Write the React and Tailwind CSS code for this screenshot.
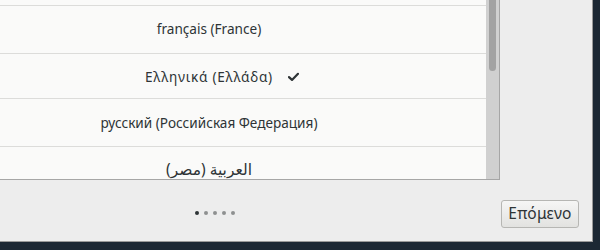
import React from "react";

const font = { fontFamily: '"Noto Sans", "DejaVu Sans", sans-serif' };

function Check() {
  return (
    <svg width="11" height="9" viewBox="0 0 11 9" className="absolute left-full top-1/2 ml-[15px] -translate-y-1/2">
      <path d="M1 4.6 L4 7.4 L10 1.2" fill="none" stroke="#2e3436" strokeWidth="2.2" strokeLinecap="round" strokeLinejoin="round" />
    </svg>
  );
}

export default function App() {
  return (
    <div className="w-[600px] h-[250px] bg-[#1c2834] overflow-hidden" style={font}>
      <div className="w-[593px] h-[242px] bg-[#ededed] border-r border-b border-[#9a9a9a] flex flex-col">
        <div className="w-[500px] h-[180px] flex border-r border-b border-[#a6a6a6]">
          <div className="w-[486px] h-full overflow-hidden bg-[#fafaf9]">
            <div className="w-[554px] ml-[-68px] flex flex-col text-[13.6px] text-[#2e3436]">
              <div className="h-[6px] border-b border-[#dcdcda]" />
              <div className="h-[48px] border-b border-[#dcdcda] flex items-center justify-center">
                <span>français (France)</span>
              </div>
              <div className="h-[45px] border-b border-[#dcdcda] flex items-center justify-center pt-[2px]">
                <span className="relative tracking-[0.75px]">
                  Ελληνικά (Ελλάδα)
                  <Check />
                </span>
              </div>
              <div className="h-[48px] border-b border-[#dcdcda] flex items-center justify-center pt-[2px]">
                <span>русский (Российская Федерация)</span>
              </div>
              <div className="h-[48px] flex items-center justify-center pb-[2px]">
                <span dir="rtl" className="text-[15.5px]">العربية (مصر)</span>
              </div>
            </div>
          </div>
          <div className="w-[13px] h-full bg-[#d0d0d0] pl-[3px]">
            <div className="w-[7px] h-[81px] mt-[-10px] rounded-full bg-[#a2a2a2]" />
          </div>
        </div>
        <div className="flex pt-[20px]">
          <div className="w-[430px] h-[28px] flex items-center justify-center gap-[5px]">
            <span className="w-[4px] h-[4px] rounded-full bg-[#2e3436] mb-[2px]" />
            <span className="w-[4px] h-[4px] rounded-full bg-[#8e9090] mb-[2px]" />
            <span className="w-[4px] h-[4px] rounded-full bg-[#8e9090] mb-[2px]" />
            <span className="w-[4px] h-[4px] rounded-full bg-[#8e9090] mb-[2px]" />
            <span className="w-[4px] h-[4px] rounded-full bg-[#8e9090] mb-[2px]" />
          </div>
          <div className="ml-[71px] w-[78px] h-[28px] rounded-[3px] border border-[#b6b6b3] bg-gradient-to-b from-[#f6f6f5] to-[#e2e2e0] flex items-center justify-center text-[15.5px] text-[#2e3436] tracking-[0.2px]">
            Επόμενο
          </div>
        </div>
      </div>
    </div>
  );
}
